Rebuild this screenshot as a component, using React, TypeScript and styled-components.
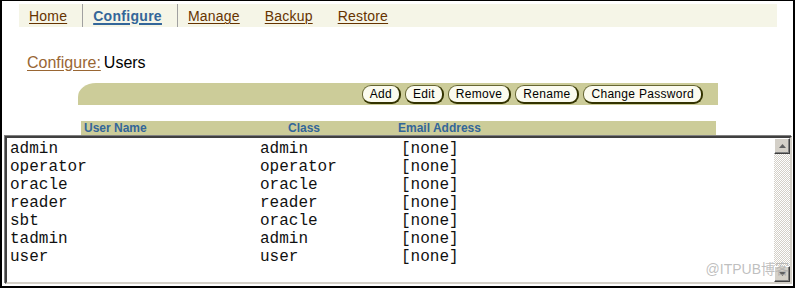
import { createGlobalStyle } from "styled-components";
import styled from "styled-components";

const GlobalStyle = createGlobalStyle`
  html, body {
    margin: 0;
    padding: 0;
    background: #ffffff;
  }
  body {
    font-family: "Liberation Sans", Arial, sans-serif;
  }
`

const Frame = styled.div`
  position: relative;
  width: 795px;
  height: 288px;
  box-sizing: border-box;
  border: 2px solid #000;
  border-top-width: 1px;
  background: #fff;
  overflow: hidden;
`

const TabBar = styled.nav`
  display: flex;
  align-items: stretch;
  margin: 3px 0 0 17px;
  width: 758px;
  height: 23px;
  padding-left: 10px;
  box-sizing: border-box;
  background-color: #f5f5e7;
`

const Tab = styled.a<{ $active?: boolean; $sep?: boolean }>`
  display: flex;
  align-items: center;
  font-size: 14px;
  letter-spacing: ${p => (p.$active ? "0.3px" : "0.2px")};
  font-weight: ${p => (p.$active ? 700 : 400)};
  color: ${p => (p.$active ? "#336699" : "#663300")};
  text-decoration: underline;
  text-decoration-thickness: ${p => (p.$active ? "2px" : "1px")};
  text-underline-offset: 2px;
  padding-top: 1px;
  padding-right: ${p => (p.$sep ? "15px" : "0")};
  margin-right: ${p => (p.$sep ? "10px" : "25px")};
  border-right: ${p => (p.$sep ? "1px solid #a0a0a0" : "none")};
  cursor: pointer;
`

const Breadcrumb = styled.div`
  display: flex;
  gap: 3px;
  margin: 26px 0 0 25px;
  font-size: 16px;
  line-height: 20px;
  color: #000;
`

const CrumbLink = styled.a`
  color: #996633;
  text-decoration: underline;
  text-underline-offset: 2px;
`

const Toolbar = styled.div`
  display: flex;
  justify-content: flex-end;
  align-items: center;
  gap: 4px;
  margin: 10px 0 0 76px;
  width: 640px;
  height: 22px;
  padding: 1px 15px 0 0;
  box-sizing: border-box;
  background-color: #cccc99;
  border-top-left-radius: 18px 14px;
`

const Button = styled.button`
  height: 19px;
  padding: 0 7px;
  box-sizing: border-box;
  font-family: "Liberation Sans", Arial, sans-serif;
  font-size: 12px;
  letter-spacing: 0.3px;
  line-height: 15px;
  color: #000;
  background: #fbfbef;
  border: 1px solid #666633;
  border-right: 2px solid #333300;
  border-bottom: 2px solid #333300;
  border-radius: 9px;
  cursor: pointer;
`

const HeaderRow = styled.div`
  display: grid;
  grid-template-columns: 204px 110px 1fr;
  align-items: center;
  margin: 16px 0 0 79px;
  width: 635px;
  height: 15px;
  padding-left: 3px;
  box-sizing: border-box;
  background-color: #cccc99;
`

const HeaderCell = styled.span`
  font-size: 12px;
  font-weight: 700;
  color: #336699;
  line-height: 15px;
`

const ListBox = styled.div`
  display: flex;
  margin: 0 0 0 3px;
  width: 787px;
  height: 148px;
  box-sizing: border-box;
  border-style: solid;
  border-width: 2px;
  border-color: #404040 #d4d0c8 #d4d0c8 #404040;
  box-shadow: -1px -1px 0 #808080, 1px 1px 0 #fff;
  background: #fff;
`

const Rows = styled.div`
  flex: 1;
  padding: 2px 0 0 3px;
`

const Row = styled.div`
  display: grid;
  grid-template-columns: 250px 141px 1fr;
  height: 18px;
  font-family: "Liberation Mono", "Courier New", monospace;
  font-size: 16px;
  line-height: 18px;
  color: #111;
  white-space: pre;
`

const ScrollBar = styled.div`
  display: flex;
  flex-direction: column;
  justify-content: space-between;
  width: 16px;
  background: repeating-conic-gradient(#d4d0c8 0 25%, #ffffff 0 50%) 0 0 / 2px 2px;
`

const ScrollButton = styled.div`
  display: flex;
  align-items: center;
  justify-content: center;
  width: 16px;
  height: 16px;
  box-sizing: border-box;
  background: #d4d0c8;
  border-style: solid;
  border-width: 1px;
  border-color: #ffffff #404040 #404040 #ffffff;
  box-shadow: inset -1px -1px 0 #808080;
`

const Watermark = styled.div`
  position: absolute;
  right: 4px;
  bottom: 8px;
  font-family: "Liberation Sans", "Noto Sans CJK SC", sans-serif;
  font-size: 14px;
  color: rgba(170, 170, 170, 0.75);
  pointer-events: none;
`

const users = [
  { name: "admin", cls: "admin" },
  { name: "operator", cls: "operator" },
  { name: "oracle", cls: "oracle" },
  { name: "reader", cls: "reader" },
  { name: "sbt", cls: "oracle" },
  { name: "tadmin", cls: "admin" },
  { name: "user", cls: "user" },
]

const Arrow = ({ down }: { down?: boolean }) => (
  <svg width="7" height="4" viewBox="0 0 7 4">
    <path d={down ? "M0 0 H7 L3.5 4 Z" : "M0 4 H7 L3.5 0 Z"} fill="#606060" />
  </svg>
)

const App = () => {
  return (
    <>
      <GlobalStyle />
      <Frame>
        <TabBar>
          <Tab $sep>Home</Tab>
          <Tab $sep $active>Configure</Tab>
          <Tab>Manage</Tab>
          <Tab>Backup</Tab>
          <Tab>Restore</Tab>
        </TabBar>

        <Breadcrumb>
          <CrumbLink>Configure:</CrumbLink>
          <span>Users</span>
        </Breadcrumb>

        <Toolbar>
          <Button type="button">Add</Button>
          <Button type="button">Edit</Button>
          <Button type="button">Remove</Button>
          <Button type="button">Rename</Button>
          <Button type="button">Change Password</Button>
        </Toolbar>

        <HeaderRow>
          <HeaderCell>User Name</HeaderCell>
          <HeaderCell>Class</HeaderCell>
          <HeaderCell>Email Address</HeaderCell>
        </HeaderRow>

        <ListBox>
          <Rows>
            {users.map(u => (
              <Row key={u.name}>
                <span>{u.name}</span>
                <span>{u.cls}</span>
                <span>[none]</span>
              </Row>
            ))}
          </Rows>
          <ScrollBar>
            <ScrollButton><Arrow /></ScrollButton>
            <ScrollButton><Arrow down /></ScrollButton>
          </ScrollBar>
        </ListBox>

        <Watermark>@ITPUB博客</Watermark>
      </Frame>
    </>
  )
}

export default App
